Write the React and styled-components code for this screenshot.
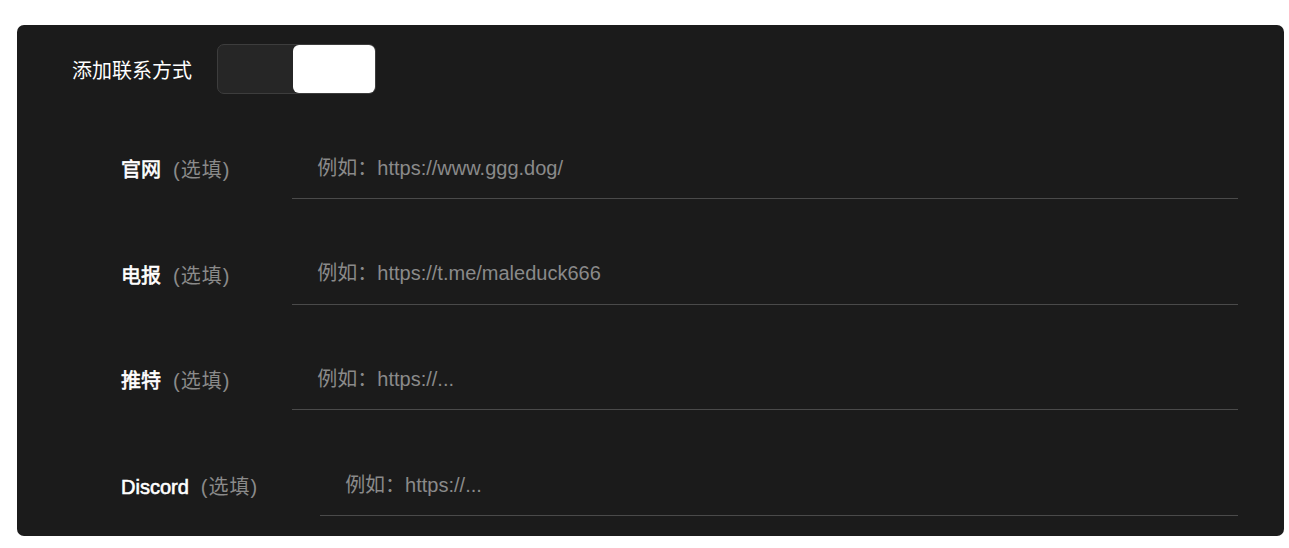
import React from 'react'
import styled, { createGlobalStyle } from 'styled-components'

const GlobalStyle = createGlobalStyle`
  body {
    margin: 0;
    background: #ffffff;
    font-family: "Liberation Sans", Arial, "Noto Sans CJK SC", sans-serif;
  }
`

const Page = styled.div`
  padding: 25px 5px 12px 17px;
`

const Panel = styled.div`
  background: #1b1b1b;
  border-radius: 7px;
  padding: 19px 46px 20px 55px;
`

const Header = styled.div`
  display: flex;
  align-items: center;
  gap: 25px;
  margin-bottom: 44px;
`

const Title = styled.div`
  color: #ffffff;
  font-size: 20px;
  font-weight: 400;
`

const Toggle = styled.div`
  width: 157px;
  height: 48px;
  box-sizing: content-box;
  border: 1px solid #3d3d3d;
  border-radius: 7px;
  background: #262626;
  display: flex;
  justify-content: ${p => (p.$on ? 'flex-end' : 'flex-start')};
`

const Knob = styled.div`
  width: 82px;
  height: 48px;
  border-radius: 6px;
  background: #ffffff;
`

const Rows = styled.div`
  display: flex;
  flex-direction: column;
  gap: 44.7px;
  padding-left: 49px;
`

const Row = styled.div`
  display: flex;
  align-items: center;
  gap: 62px;
`

const Label = styled.div`
  font-size: 20px;
  white-space: nowrap;
`

const Name = styled.span`
  color: #ffffff;
  font-weight: 400;
  -webkit-text-stroke: 0.6px #ffffff;
`

const Optional = styled.span`
  color: #8a8a8a;
  font-weight: 400;
  margin-left: 12px;
  letter-spacing: 1px;
`

const Input = styled.input`
  flex: 1;
  height: 61px;
  box-sizing: border-box;
  background: transparent;
  border: 0;
  border-bottom: 1px solid #4a4a4a;
  outline: none;
  padding: 0 0 0 25px;
  font-family: inherit;
  font-size: 20px;
  color: #ffffff;
  &::placeholder {
    color: #8a8a8a;
  }
`

const fields = [
  { name: '官网', placeholder: '例如：https://www.ggg.dog/' },
  { name: '电报', placeholder: '例如：https://t.me/maleduck666' },
  { name: '推特', placeholder: '例如：https://...' },
  { name: 'Discord', placeholder: '例如：https://...' },
]

const App = () => {
  return (
    <Page>
      <GlobalStyle />
      <Panel>
        <Header>
          <Title>添加联系方式</Title>
          <Toggle $on>
            <Knob />
          </Toggle>
        </Header>
        <Rows>
          {fields.map(f => (
            <Row key={f.name}>
              <Label>
                <Name>{f.name}</Name>
                <Optional>(选填)</Optional>
              </Label>
              <Input placeholder={f.placeholder} />
            </Row>
          ))}
        </Rows>
      </Panel>
    </Page>
  )
}

export default App
